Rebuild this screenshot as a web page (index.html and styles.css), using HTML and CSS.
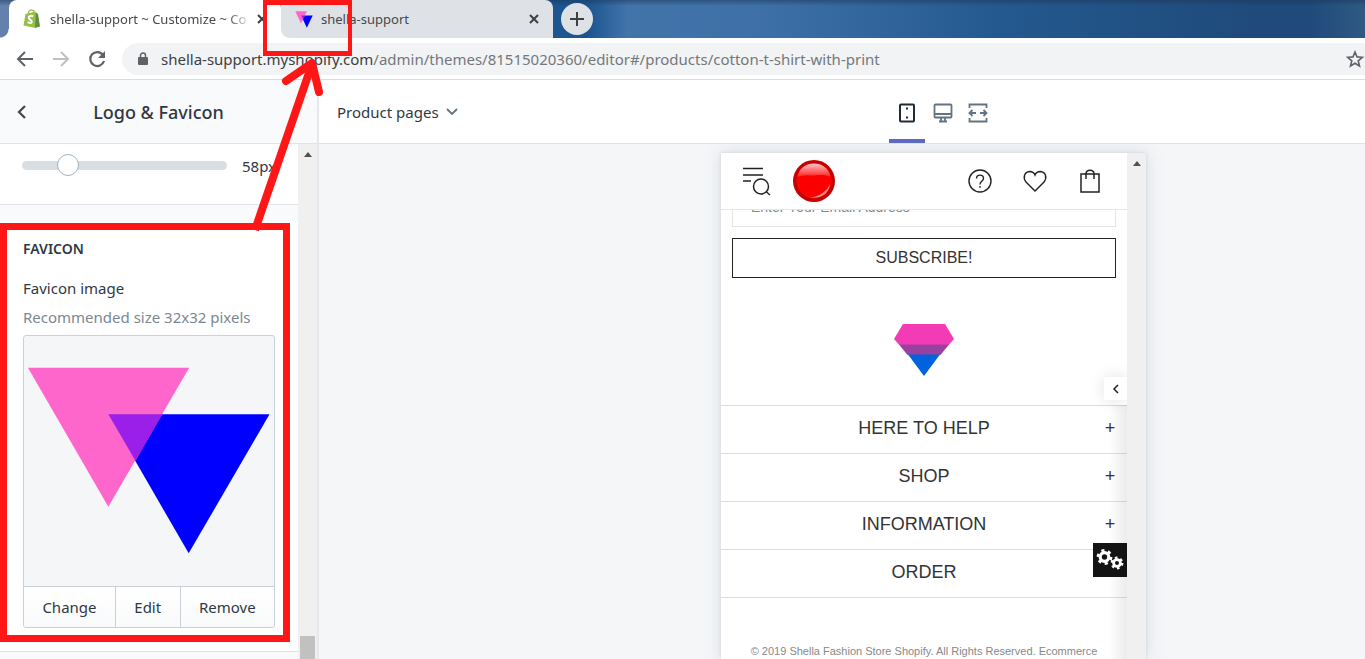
FILE: index.html
```html
<!DOCTYPE html>
<html lang="en">
<head>
<meta charset="utf-8">
<title>shella-support ~ Customize</title>
<link rel="stylesheet" href="styles.css">
</head>
<body>
<svg width="0" height="0" class="defs" aria-hidden="true">
  <symbol id="triangles" viewBox="0 0 252 252">
    <path d="M85 79H247.500L166 219Z" fill="#0000ff"/>
    <path d="M4 32H166.500L85 172Z" fill="#ff66cc"/>
    <path d="M85 79H139.500L112.500 126Z" fill="#9a1fe8"/>
  </symbol>
  <symbol id="close" viewBox="0 0 12 12"><path d="M2 2L10 10M10 2L2 10" stroke="#3c4043" stroke-width="2" fill="none"/></symbol>
</svg>
<div class="window">
  <header class="tabs">
    <div class="tab active">
      <svg class="fav" viewBox="0 0 18 20"><path d="M2.500 5L12.500 2.500L12.500 19L.5 16.500Z" fill="#95bf47"/><path d="M12.500 3L15 5L17 17.500L12 19Z" fill="#5e8e3e"/><path d="M5 5C5.500 2 8 0 9.500 1.500C11 1 11.500 3 11.500 4" fill="none" stroke="#95bf47" stroke-width="1.200"/><path d="M10.200 7.200C7 6 5.500 7.500 5.800 9C6.200 10.800 9 11 8.800 12.800C8.500 14.500 6.500 14.200 4.600 13.200" fill="none" stroke="#fff" stroke-width="2"/></svg>
      <span class="title fade">shella-support ~ Customize ~ Co</span>
      <button class="x" aria-label="Close tab"><svg viewBox="0 0 12 12"><use href="#close"/></svg></button>
    </div>
    <div class="tab second">
      <svg class="fav" viewBox="0 28 252 194" preserveAspectRatio="none"><use href="#triangles" width="252" height="252"/></svg>
      <span class="title">shella-support</span>
      <button class="x" aria-label="Close tab"><svg viewBox="0 0 12 12"><use href="#close"/></svg></button>
    </div>
    <button class="newtab" aria-label="New tab"><svg viewBox="0 0 14 14"><path d="M7 0V14M0 7H14" stroke="#3c4043" stroke-width="2"/></svg></button>
  </header>
  <nav class="toolbar">
    <button aria-label="Back"><svg viewBox="0 0 18 18"><path d="M17 9H2M9 2L2 9L9 16" fill="none" stroke="#5f6368" stroke-width="2"/></svg></button>
    <button aria-label="Forward"><svg viewBox="0 0 18 18"><path d="M1 9H16M9 2L16 9L9 16" fill="none" stroke="#bdc1c6" stroke-width="2"/></svg></button>
    <button aria-label="Reload"><svg viewBox="0 0 18 18"><path d="M15 5A7 7 0 1 0 16 11" fill="none" stroke="#5f6368" stroke-width="2.200"/><path d="M17 1V8H10Z" fill="#5f6368"/></svg></button>
    <div class="address">
      <svg class="lock" viewBox="0 0 10 14"><rect y="5" width="10" height="8" rx="1" fill="#5f6368"/><path d="M2.500 5V3.500A2.500 2.500 0 0 1 7.500 3.500V5" fill="none" stroke="#5f6368" stroke-width="1.500"/></svg>
      <div class="url" role="textbox" contenteditable="true" spellcheck="false" aria-label="Address"><b>shella-support.myshopify.com</b>/admin/themes/81515020360/editor#/products/cotton-t-shirt-with-print</div>
      <button class="star" aria-label="Bookmark"><svg viewBox="0 0 18 18"><path d="M9 2L11 6.900L16.300 7.300L12.200 10.800L13.500 16L9 13.200L4.500 16L5.800 10.800L1.700 7.300L7 6.900Z" fill="none" stroke="#5f6368" stroke-width="1.600"/></svg></button>
    </div>
  </nav>
  <div class="app">
    <aside class="side">
      <div class="side-head">
        <button aria-label="Back to sections"><svg viewBox="0 0 10 14"><path d="M8 1L2 7L8 13" fill="none" stroke="#42474c" stroke-width="2.200"/></svg></button>
        <h1>Logo &amp; Favicon</h1>
      </div>
      <div class="side-body">
        <div class="panels">
          <section class="slider-card">
            <input type="range" min="0" max="200" value="38" aria-label="Logo width"><output>58px</output>
          </section>
          <section class="fav-card">
            <h2>Favicon</h2>
            <h3>Favicon image</h3>
            <p>Recommended size 32x32 pixels</p>
            <div class="picker">
              <svg viewBox="0 0 252 252" role="img" aria-label="Favicon"><use href="#triangles"/></svg>
              <div class="actions"><button>Change</button><button>Edit</button><button>Remove</button></div>
            </div>
            <div class="mark mark-panel"></div>
          </section>
        </div>
        <div class="bar"><i class="up"></i><i class="thumb"></i></div>
      </div>
    </aside>
    <main class="main">
      <div class="main-head">
        <button class="pages">Product pages <svg viewBox="0 0 12 8"><path d="M1 1L6 6L11 1" fill="none" stroke="#637381" stroke-width="1.800"/></svg></button>
        <div class="devices">
          <button class="on" aria-label="Mobile"><svg viewBox="0 0 20 20" fill="none" stroke="#212b36" stroke-width="2"><rect x="3" y="1.500" width="14" height="17" rx="1"/><path d="M9 5.500H11M9 14.500H11"/></svg></button>
          <button aria-label="Desktop"><svg viewBox="0 0 20 20" fill="none" stroke="#637381" stroke-width="1.800"><rect x="1.500" y="1.500" width="17" height="13" rx="1"/><path d="M2 11H18M8 15V18M12 15V18M6 18.500H14"/></svg></button>
          <button aria-label="Full width"><svg viewBox="0 0 20 20" fill="none" stroke="#637381" stroke-width="1.800"><path d="M1.500 5V1.500H18.500V5M1.500 15V18.500H18.500V15M1.500 10H8M12 10H18.500M4.500 7L1.500 10L4.500 13M15.500 7L18.500 10L15.500 13"/></svg></button>
        </div>
      </div>
      <div class="stage">
        <div class="preview">
          <div class="store">
            <header class="store-head">
              <button class="menu" aria-label="Menu"><svg viewBox="0 0 28 28" fill="none" stroke="#222" stroke-width="1.500"><path d="M0 1.500H20M0 8H20M0 14H8"/><circle cx="18" cy="19.500" r="7.500"/><path d="M23.500 25L27 28"/></svg></button>
              <a href="#" class="logo" aria-label="Home"><svg viewBox="0 0 42 42"><defs><linearGradient id="gloss" x2="0" y2="1"><stop offset="0" stop-color="#ffc4c4"/><stop offset="1" stop-color="#ff2020"/></linearGradient></defs><circle cx="21" cy="21" r="21" fill="#c60000"/><circle cx="21" cy="21" r="17.500" fill="#fb0000"/><path d="M4.500 17C6 8 13 3.500 21 3.500S36 8 37.500 17C30 13 23 16 17 15.500S8 16 4.500 17Z" fill="url(#gloss)"/><path d="M17 37.500C27 36.500 34 31 37 24C36 33 29 39 17 37.500Z" fill="#ff8b8b"/></svg></a>
              <div class="tools">
                <button aria-label="Help"><svg viewBox="0 0 24 24" fill="none" stroke="#222" stroke-width="1.400"><circle cx="12" cy="12" r="11"/><path d="M8.500 9.500C8.500 5 15.500 5 15.500 9.500C15.500 12 12 12 12 15.500M12 17V18.800"/></svg></button>
                <button aria-label="Wishlist"><svg viewBox="0 0 24 24" fill="none" stroke="#222" stroke-width="1.400"><path d="M12 22L3 13C-.5 8.500 1.500 3 6.500 2.500C9 2.500 11 3.500 12 6C13 3.500 15 2.500 17.500 2.500C22.500 3 24.500 8.500 21 13Z"/></svg></button>
                <button aria-label="Cart"><svg viewBox="0 0 24 24" fill="none" stroke="#222" stroke-width="1.500"><path d="M3 5H21V23H3ZM8 10V5C8 0 16 0 16 5V10"/></svg></button>
              </div>
            </header>
            <div class="store-body">
              <form class="sub"><input type="email" placeholder="Enter Your Email Address" aria-label="Email"><button type="button">SUBSCRIBE!</button></form>
              <svg class="gem" viewBox="0 0 60 52"><path d="M9 0H51L60 15L54.700 21H5.300L0 15Z" fill="#f23bb4"/><path d="M5 20.500H55L46.500 31H13.500Z" fill="#9a40a1"/><path d="M14 30.500H46L30 52Z" fill="#0062dc"/></svg>
              <ul class="links">
                <li><button>HERE TO HELP<span>+</span></button></li>
                <li><button>SHOP<span>+</span></button></li>
                <li><button>INFORMATION<span>+</span></button></li>
                <li><button>ORDER<span>+</span></button></li>
              </ul>
              <p class="copy">© 2019 Shella Fashion Store Shopify. All Rights Reserved. Ecommerce</p>
            </div>
            <div class="shade"></div>
            <button class="expand" aria-label="Open panel"><svg viewBox="0 0 6 8"><path d="M5 0L1 4L5 8" fill="none" stroke="#222" stroke-width="1.500"/></svg></button>
            <button class="gears" aria-label="Settings"><svg viewBox="0 0 30 24" fill="none" stroke="#fff"><circle cx="9.500" cy="9" r="4.300" stroke-width="3.200"/><circle cx="9.500" cy="9" r="6.600" stroke-width="2.600" stroke-dasharray="3.200 3.710"/><circle cx="22" cy="15" r="3.400" stroke-width="2.800"/><circle cx="22" cy="15" r="5.300" stroke-width="2.200" stroke-dasharray="2.600 2.950"/></svg></button>
          </div>
          <div class="bar"><i class="up"></i></div>
        </div>
      </div>
    </main>
  </div>
  <div class="mark mark-tab"></div>
  <svg class="arrow" viewBox="0 0 80 180" fill="none" stroke="#ff1717" stroke-width="8"><path d="M15 180L72 14"/><path d="M46 31L72 13L79 42" stroke-linecap="round" stroke-linejoin="round"/></svg>
</div>
</body>
</html>
```
FILE: styles.css
```css
* { box-sizing: border-box; }
body { margin: 0; font-family: "Noto Sans", "Open Sans", sans-serif; font-size: 15px; color: #2f3943; }
button { font: inherit; color: inherit; background: none; border: 0; padding: 0; display: flex; align-items: center; justify-content: center; }
svg { display: block; overflow: visible; }
h1, h2, h3, p, ul { margin: 0; padding: 0; }
.defs { position: absolute; }
.window { position: relative; display: flex; flex-direction: column; height: 100vh; overflow: hidden; background: #fff; }

.tabs { display: flex; flex: none; height: 38px; padding-left: 9px; align-items: stretch; background: linear-gradient(#1a365880, transparent 6px), linear-gradient(90deg, #6581ae 0, #1c5590 40%, #1c5590 43%, #4274aa 46%, #3f71a8 55%, #24598f 73%, #1f4a7b 92%, #1f4a7b 96%, #2f5a82 100%); }
.tab { display: flex; align-items: center; width: 272px; padding: 0 13px 0 14px; background: #fff; border-radius: 8px 8px 0 0; color: #45494d; font-size: 13px; position: relative; }
.tab.active::before { content: ""; position: absolute; left: -9px; bottom: 0; width: 9px; height: 9px; background: radial-gradient(circle at 0 0, transparent 8px, #fff 9px); }
.tab.second { background: #dee1e6; border-radius: 0 8px 0 8px; }
.tab.second::before { content: ""; position: absolute; left: 0; bottom: 0; width: 8px; height: 8px; background: radial-gradient(circle at 100% 0, transparent 7px, #fff 8px); }
.fav { width: 18px; height: 20px; flex: none; }
.second .fav { height: 17px; }
.title { flex: 1; margin-left: 9px; white-space: nowrap; overflow: hidden; }
.second .title { margin-left: 8px; }
.fade { -webkit-mask-image: linear-gradient(90deg, #000 86%, transparent 98%); mask-image: linear-gradient(90deg, #000 86%, transparent 98%); }
.x svg { width: 12px; height: 12px; }
.newtab { width: 32px; height: 32px; margin: 3px 0 0 8px; border-radius: 50%; background: #dee1e6; }
.newtab svg { width: 14px; height: 14px; }

.toolbar { display: flex; flex: none; align-items: center; height: 42px; gap: 18px; padding-left: 16px; border-bottom: 1px solid #dadce0; }
.toolbar svg { width: 18px; height: 18px; }
.address { display: flex; flex: 1; align-items: center; height: 32px; margin-left: -2px; padding: 0 1px 0 16px; border-radius: 16px 0 0 16px; background: #f1f3f4; }
.address .lock { width: 10px; height: 14px; }
.url { flex: 1; margin-left: 13px; white-space: nowrap; color: #74787c; }
.url b { font-weight: 400; color: #3c4043; }

.app { display: flex; flex: 1; min-height: 0; }
.side { display: flex; flex-direction: column; width: 319px; flex: none; border-right: 2px solid #e4e8ec; background: #f9fafb; }
.side-head { display: grid; grid-template-columns: 44px 1fr 44px; align-items: center; flex: none; height: 64px; border-bottom: 1px solid #e0e4e8; }
.side-head svg { width: 10px; height: 14px; }
h1 { font-size: 18px; line-height: 24px; font-weight: 500; text-align: center; }
.side-body { display: flex; flex: 1; min-height: 0; }
.panels { flex: 1; min-width: 0; }
.slider-card { display: flex; align-items: center; height: 61px; padding: 0 22px 17px; gap: 15px; background: #fff; border-bottom: 1px solid #e0e4e8; }
input[type=range] { appearance: none; width: 205px; height: 22px; margin: 0; background: none; }
input[type=range]::-webkit-slider-runnable-track { height: 9px; border-radius: 5px; background: #d9dee3; }
input[type=range]::-webkit-slider-thumb { appearance: none; width: 22px; height: 22px; margin-top: -7px; border: 1px solid #9fb2c2; border-radius: 50%; background: #fff; }
.fav-card { position: relative; margin-top: 17px; padding: 15px 23px 23px; background: #fff; border-bottom: 1px solid #e0e4e8; }
h2 { font-size: 14px; line-height: 24px; font-weight: 600; text-transform: uppercase; }
h3 { font-size: 15px; line-height: 24px; font-weight: 400; margin-top: 15px; }
.fav-card p { color: #7b8792; line-height: 24px; margin-top: 5px; white-space: nowrap; }
.picker { margin-top: 6px; border: 1px solid #c9d0d7; border-radius: 3px; background: #f4f6f8; overflow: hidden; }
.picker svg { width: 100%; }
.actions { display: flex; height: 41px; border-top: 1px solid #c9d0d7; background: linear-gradient(#fff, #f9fafb); }
.actions button { flex: auto; padding: 0 12px; }
.actions button + button { border-left: 1px solid #c9d0d7; }
.bar { display: flex; flex-direction: column; align-items: center; justify-content: space-between; width: 19px; flex: none; background: #f0f0f0; }
.up { margin-top: 8px; border: 4px solid transparent; border-top: 0; border-bottom: 5px solid #505050; }
.thumb { width: 15px; height: 23px; background: #c1c1c1; }

.main { display: flex; flex: 1; flex-direction: column; min-width: 0; background: #f4f6f8; }
.main-head { display: grid; grid-template-columns: 552px auto; justify-content: start; flex: none; height: 64px; padding-left: 18px; border-bottom: 1px solid #dfe3e8; background: #fff; }
.pages { justify-content: flex-start; gap: 7px; }
.pages svg { width: 12px; height: 8px; }
.devices { display: flex; }
.devices button { width: 35px; padding-top: 7px; border-bottom: 4px solid transparent; }
.devices .on { width: 36px; border-color: #5c6ac4; }
.devices svg { width: 20px; height: 20px; }
.stage { display: flex; justify-content: center; flex: 1; min-height: 0; padding: 9px 0 0 183px; overflow: hidden; }
.preview { display: flex; width: 425px; background: #fff; box-shadow: 0 0 16px #8b95a040, 0 0 3px #8b95a040; }
.store { position: relative; display: flex; flex: 1; flex-direction: column; min-width: 0; overflow: hidden; font-family: "Liberation Sans", Arial, sans-serif; color: #333; }
.store-head { display: flex; align-items: center; flex: none; height: 57px; padding: 0 25px 0 22px; border-bottom: 1px solid #e5e5e5; }
.menu svg { width: 28px; height: 28px; }
.logo { margin-left: 22px; }
.logo svg { width: 42px; height: 42px; }
.tools { display: flex; margin-left: auto; gap: 31px; }
.tools svg { width: 24px; height: 24px; }
.store-body { flex: 1; min-height: 0; overflow: hidden; }
.sub { display: flex; flex-direction: column; gap: 11px; margin: -24px 11px 0; }
.sub input { height: 41px; border: 1px solid #e5e5e5; padding: 0 18px; font: 14px "Liberation Sans", Arial, sans-serif; }
.sub input::placeholder { color: #888; }
.sub button { height: 40px; border: 1px solid #222; font-size: 16px; }
.gem { width: 60px; height: 52px; margin: 46px auto 29px; }
.links { list-style: none; border-top: 1px solid #dedede; }
.links li { border-bottom: 1px solid #dedede; }
.links button { display: grid; grid-template-columns: 34px 1fr 34px; width: 100%; height: 47px; padding-bottom: 2px; font-size: 18px; }
.links button::before { content: ""; }
.copy { margin-top: 47px; text-align: center; font-size: 11px; color: #888; white-space: nowrap; }
.shade { position: absolute; right: 0; top: 252px; width: 18px; height: 100%; background: linear-gradient(90deg, transparent, #00000014); pointer-events: none; }
.expand { position: absolute; right: 0; top: 224px; width: 23px; height: 23px; background: #fff; box-shadow: 0 0 16px #0000001f; }
.expand svg { width: 6px; height: 8px; }
.gears { position: absolute; right: 0; top: 390px; width: 34px; height: 34px; background: #141414; }
.gears svg { width: 30px; height: 24px; }

.mark { position: absolute; pointer-events: none; border: 7px solid #ff1717; }
.mark-panel { left: 0; right: 8px; top: 1px; bottom: 9px; }
.mark-tab { left: 263px; top: 0; width: 89px; height: 56px; border-width: 5px 4px; }
.arrow { position: absolute; left: 240px; top: 50px; width: 80px; height: 180px; pointer-events: none; }
```
